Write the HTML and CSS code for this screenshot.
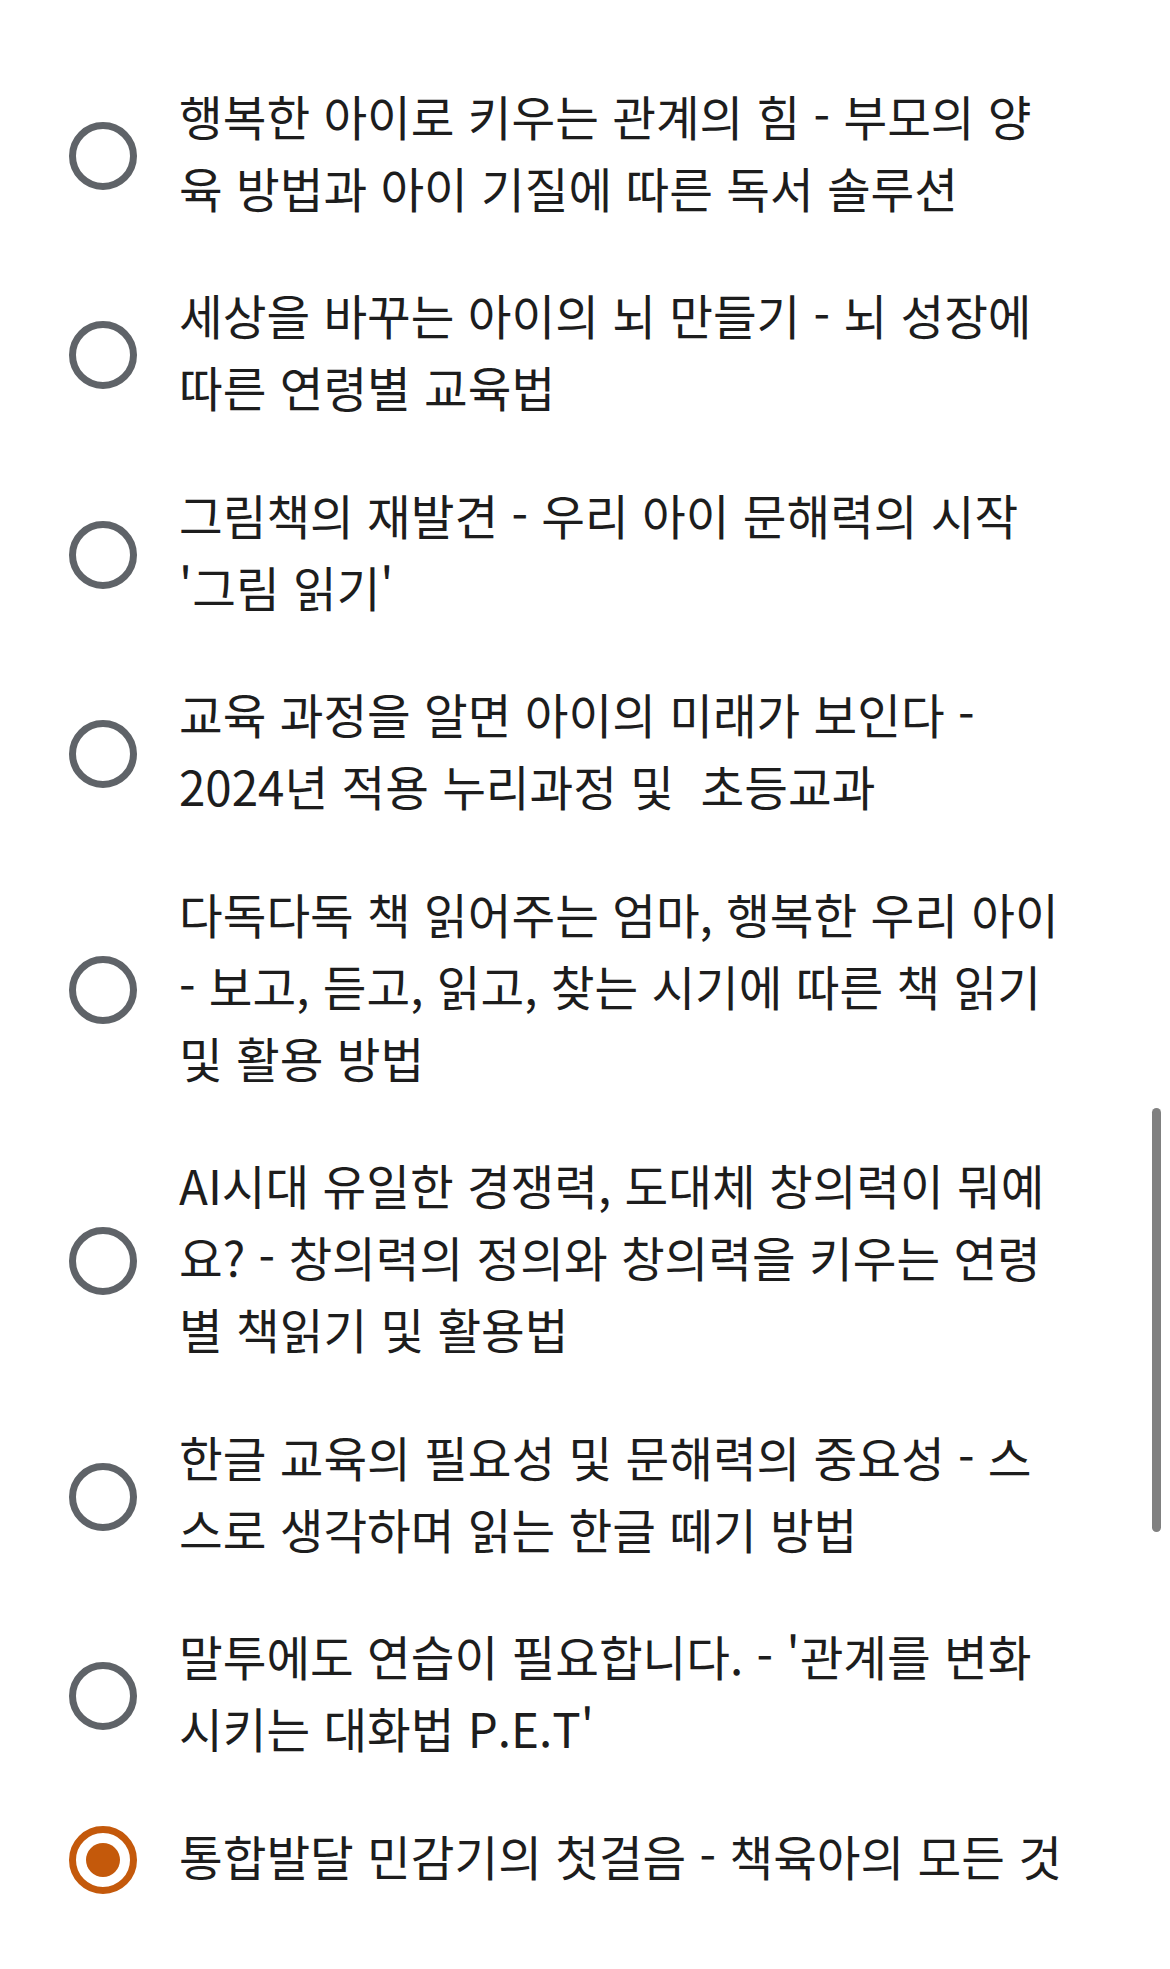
FILE: index.html
```html
<!DOCTYPE html>
<html lang="ko">
<head>
<meta charset="utf-8">
<title>강의 선택</title>
<link rel="stylesheet" href="styles.css">
</head>
<body>
<div class="page">
  <ul class="options">
    <li class="option">
      <span class="radio"></span>
      <span class="label">행복한 아이로 키우는 관계의 힘 - 부모의 양<br>육 방법과 아이 기질에 따른 독서 솔루션</span>
    </li>
    <li class="option">
      <span class="radio"></span>
      <span class="label">세상을 바꾸는 아이의 뇌 만들기 - 뇌 성장에<br>따른 연령별 교육법</span>
    </li>
    <li class="option">
      <span class="radio"></span>
      <span class="label">그림책의 재발견 - 우리 아이 문해력의 시작<br>'그림 읽기'</span>
    </li>
    <li class="option">
      <span class="radio"></span>
      <span class="label">교육 과정을 알면 아이의 미래가 보인다 -<br>2024년 적용 누리과정 및&nbsp; 초등교과</span>
    </li>
    <li class="option">
      <span class="radio"></span>
      <span class="label">다독다독 책 읽어주는 엄마, 행복한 우리 아이<br>- 보고, 듣고, 읽고, 찾는 시기에 따른 책 읽기<br>및 활용 방법</span>
    </li>
    <li class="option">
      <span class="radio"></span>
      <span class="label">AI시대 유일한 경쟁력, 도대체 창의력이 뭐예<br>요? - 창의력의 정의와 창의력을 키우는 연령<br>별 책읽기 및 활용법</span>
    </li>
    <li class="option">
      <span class="radio"></span>
      <span class="label">한글 교육의 필요성 및 문해력의 중요성 - 스<br>스로 생각하며 읽는 한글 떼기 방법</span>
    </li>
    <li class="option">
      <span class="radio"></span>
      <span class="label">말투에도 연습이 필요합니다. - '관계를 변화<br>시키는 대화법 P.E.T'</span>
    </li>
    <li class="option is-checked">
      <span class="radio"></span>
      <span class="label">통합발달 민감기의 첫걸음 - 책육아의 모든 것</span>
    </li>
  </ul>
  <div class="scrollbar"></div>
</div>
</body>
</html>
```

FILE: styles.css
```css
html, body {
  margin: 0;
  padding: 0;
  background: #ffffff;
}

.page {
  position: relative;
  width: 1170px;
  height: 1969px;
  overflow: hidden;
  font-family: "Noto Sans CJK KR", "Noto Sans", sans-serif;
}

.options {
  list-style: none;
  margin: 0;
  padding: 56px 0 0 69px;
  display: flex;
  flex-direction: column;
}

.option {
  display: flex;
  align-items: center;
  gap: 42px;
  padding: 27.75px 0;
}

.radio {
  flex: 0 0 auto;
  width: 68px;
  height: 68px;
  box-sizing: border-box;
  border: 7px solid #5f6368;
  border-radius: 50%;
  display: flex;
  align-items: center;
  justify-content: center;
}

.is-checked .radio {
  border-color: #c4590b;
}

.is-checked .radio::after {
  content: "";
  width: 34px;
  height: 34px;
  border-radius: 50%;
  background: #c4590b;
}

.label {
  font-size: 47.5px;
  line-height: 72px;
  padding-bottom: 4px;
  margin-top: -4px;
  color: #1d1d1d;
  white-space: nowrap;
  font-weight: 400;
}

.scrollbar {
  position: absolute;
  left: 1152px;
  top: 1108px;
  width: 9px;
  height: 424px;
  border-radius: 5px;
  background: #808080;
}
```
